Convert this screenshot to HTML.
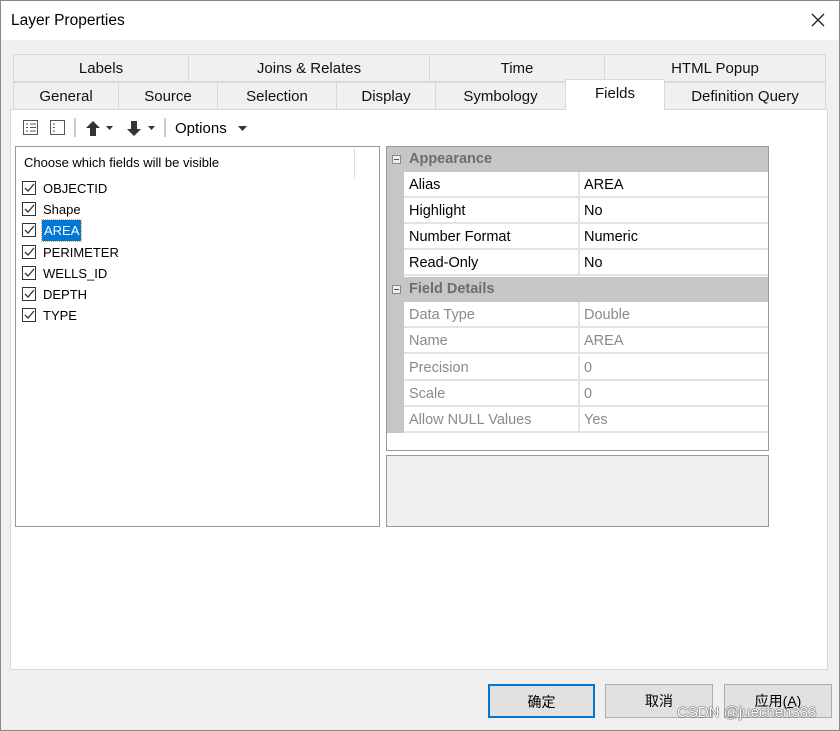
<!DOCTYPE html>
<html><head><meta charset="utf-8"><style>
*{box-sizing:border-box;margin:0;padding:0}
body{width:840px;height:731px;overflow:hidden;background:#f0f0f0;font-family:"Liberation Sans","Noto Sans CJK SC",sans-serif;font-size:15px;color:#000;position:relative}
.abs{position:absolute}
.win{left:0;top:0;width:840px;height:731px;border:1px solid #888}
.title{left:1px;top:1px;width:838px;height:39px;background:#fff}
.tab{position:absolute;background:#f0f0f0;border:1px solid #d9d9d9;text-align:center;font-size:15px;line-height:28px;color:#111}
.panel{left:10px;top:109px;width:818px;height:561px;background:#fff;border:1px solid #d9d9d9}
.row{position:absolute;left:404px;width:364px;height:26px;border-bottom:2px solid #e3e3e3;background:#fff;font-size:14.5px}
.row span{position:absolute;top:5px}
.row .k{left:5px}.row .v{left:180px}
.row .sep{position:absolute;left:174px;top:0;width:2px;height:26px;background:#e3e3e3}
.grey span{color:#8a8a8a}
.hdr{position:absolute;left:387px;width:381px;height:25px;background:#c6c6c6;font-weight:bold;color:#6d6d6d;font-size:14.5px}
.hdr b{position:absolute;left:22px;top:4px}
.hdr i{position:absolute;left:5px;top:8px;width:9px;height:9px;border:1px solid #888;background:#eee}
.hdr i:after{content:"";position:absolute;left:1px;top:3px;width:5px;height:1px;background:#555}
.item{position:absolute;left:22px;height:20px;font-size:13px;line-height:21px}
.cb{position:absolute;left:0;top:3px;width:14px;height:14px;border:1px solid #333;background:#fff}
.item .t{position:absolute;left:21px;top:0;white-space:nowrap}
.btn{position:absolute;top:684px;height:34px;background:#e1e1e1;border:1px solid #adadad;text-align:center;line-height:32px;font-size:14px}
</style></head><body>
<div class="abs win"></div>
<div class="abs title"></div>
<div class="abs" style="left:11px;top:12px;font-size:15.5px">Layer Properties</div>
<svg class="abs" style="left:811px;top:13px" width="14" height="14"><path d="M1 1L13 13M13 1L1 13" stroke="#222" stroke-width="1.3"/></svg>

<div class="tab" style="left:13px;top:54px;width:176px;height:28px">Labels</div>
<div class="tab" style="left:188px;top:54px;width:242px;height:28px">Joins &amp; Relates</div>
<div class="tab" style="left:429px;top:54px;width:176px;height:28px">Time</div>
<div class="tab" style="left:604px;top:54px;width:222px;height:28px">HTML Popup</div>
<div class="tab" style="left:13px;top:82px;width:106px;height:28px">General</div>
<div class="tab" style="left:118px;top:82px;width:100px;height:28px">Source</div>
<div class="tab" style="left:217px;top:82px;width:120px;height:28px">Selection</div>
<div class="tab" style="left:336px;top:82px;width:100px;height:28px">Display</div>
<div class="tab" style="left:435px;top:82px;width:131px;height:28px">Symbology</div>
<div class="tab" style="left:664px;top:82px;width:162px;height:28px">Definition Query</div>
<div class="abs panel"></div>
<div class="tab" style="left:565px;top:79px;width:100px;height:31px;background:#fff;border-bottom:none;line-height:28px">Fields</div>

<!-- toolbar -->
<svg class="abs" style="left:22px;top:118px" width="230" height="20">
<rect x="1.5" y="2.5" width="14" height="14" fill="#fff" stroke="#555"/>
<path d="M4 6h2M8 6h6M4 9.5h2M8 9.5h6M4 13h2M8 13h6" stroke="#555"/>
<rect x="28.5" y="2.5" width="14" height="14" fill="#fff" stroke="#555"/>
<path d="M31 6h2M31 9.5h2M31 13h2" stroke="#555"/>
<path d="M53 0v19" stroke="#999"/>
<path d="M71 3l-7 7h4v8h6v-8h4z" fill="#333"/>
<path d="M84 8h7l-3.5 4z" fill="#333"/>
<path d="M112 18l-7-7h4V3h6v8h4z" fill="#333"/>
<path d="M126 8h7l-3.5 4z" fill="#333"/>
<path d="M143 0v19" stroke="#999"/>
<path d="M216 8h9l-4.5 5z" fill="#333"/>
</svg>
<div class="abs" style="left:175px;top:120px;font-size:15px">Options</div>

<!-- left list -->
<div class="abs" style="left:15px;top:146px;width:365px;height:381px;background:#fff;border:1px solid #999"></div>
<div class="abs" style="left:354px;top:148px;width:1px;height:30px;background:#ddd"></div>
<div class="abs" style="left:24px;top:155px;font-size:13px">Choose which fields will be visible</div>
<div class="item" style="top:178px"><div class="cb"></div><svg class="abs" style="left:2px;top:5px" width="11" height="10"><path d="M1 5l3 3 6-7" stroke="#333" fill="none" stroke-width="1.3"/></svg><span class="t">OBJECTID</span></div>
<div class="item" style="top:199px"><div class="cb"></div><svg class="abs" style="left:2px;top:5px" width="11" height="10"><path d="M1 5l3 3 6-7" stroke="#333" fill="none" stroke-width="1.3"/></svg><span class="t">Shape</span></div>
<div class="item" style="top:220px"><div class="cb"></div><svg class="abs" style="left:2px;top:5px" width="11" height="10"><path d="M1 5l3 3 6-7" stroke="#333" fill="none" stroke-width="1.3"/></svg><span class="t" style="background:#0078d7;color:#fff;padding:0 2px;left:20px;outline:1px dotted #e0a040">AREA</span></div>
<div class="item" style="top:242px"><div class="cb"></div><svg class="abs" style="left:2px;top:5px" width="11" height="10"><path d="M1 5l3 3 6-7" stroke="#333" fill="none" stroke-width="1.3"/></svg><span class="t">PERIMETER</span></div>
<div class="item" style="top:263px"><div class="cb"></div><svg class="abs" style="left:2px;top:5px" width="11" height="10"><path d="M1 5l3 3 6-7" stroke="#333" fill="none" stroke-width="1.3"/></svg><span class="t">WELLS_ID</span></div>
<div class="item" style="top:284px"><div class="cb"></div><svg class="abs" style="left:2px;top:5px" width="11" height="10"><path d="M1 5l3 3 6-7" stroke="#333" fill="none" stroke-width="1.3"/></svg><span class="t">DEPTH</span></div>
<div class="item" style="top:305px"><div class="cb"></div><svg class="abs" style="left:2px;top:5px" width="11" height="10"><path d="M1 5l3 3 6-7" stroke="#333" fill="none" stroke-width="1.3"/></svg><span class="t">TYPE</span></div>

<!-- property grid -->
<div class="abs" style="left:386px;top:146px;width:383px;height:305px;background:#fff;border:1px solid #999"></div>
<div class="abs" style="left:387px;top:147px;width:17px;height:286px;background:#c6c6c6"></div>
<div class="hdr" style="top:147px"><i></i><b>Appearance</b></div>
<div class="row" style="top:172px"><span class="k">Alias</span><div class="sep"></div><span class="v">AREA</span></div>
<div class="row" style="top:198px"><span class="k">Highlight</span><div class="sep"></div><span class="v">No</span></div>
<div class="row" style="top:224px"><span class="k">Number Format</span><div class="sep"></div><span class="v">Numeric</span></div>
<div class="row" style="top:250px"><span class="k">Read-Only</span><div class="sep"></div><span class="v">No</span></div>
<div class="hdr" style="top:277px"><i></i><b>Field Details</b></div>
<div class="row grey" style="top:302px"><span class="k">Data Type</span><div class="sep"></div><span class="v">Double</span></div>
<div class="row grey" style="top:328px"><span class="k">Name</span><div class="sep"></div><span class="v">AREA</span></div>
<div class="row grey" style="top:355px"><span class="k">Precision</span><div class="sep"></div><span class="v">0</span></div>
<div class="row grey" style="top:381px"><span class="k">Scale</span><div class="sep"></div><span class="v">0</span></div>
<div class="row grey" style="top:407px"><span class="k">Allow NULL Values</span><div class="sep"></div><span class="v">Yes</span></div>
<div class="abs" style="left:386px;top:455px;width:383px;height:72px;background:#f0f0f0;border:1px solid #999"></div>

<div class="btn" style="left:488px;width:107px;border:2px solid #0078d7">确定</div>
<div class="btn" style="left:605px;width:108px">取消</div>
<div class="btn" style="left:724px;width:108px">应用(<u>A</u>)</div>
<div class="abs" style="left:677px;top:704px;font-size:15px;color:#fff;text-shadow:0 0 1px #444,0 0 1px #444,0 0 1px #444">CSDN @juechen333</div>
</body></html>
